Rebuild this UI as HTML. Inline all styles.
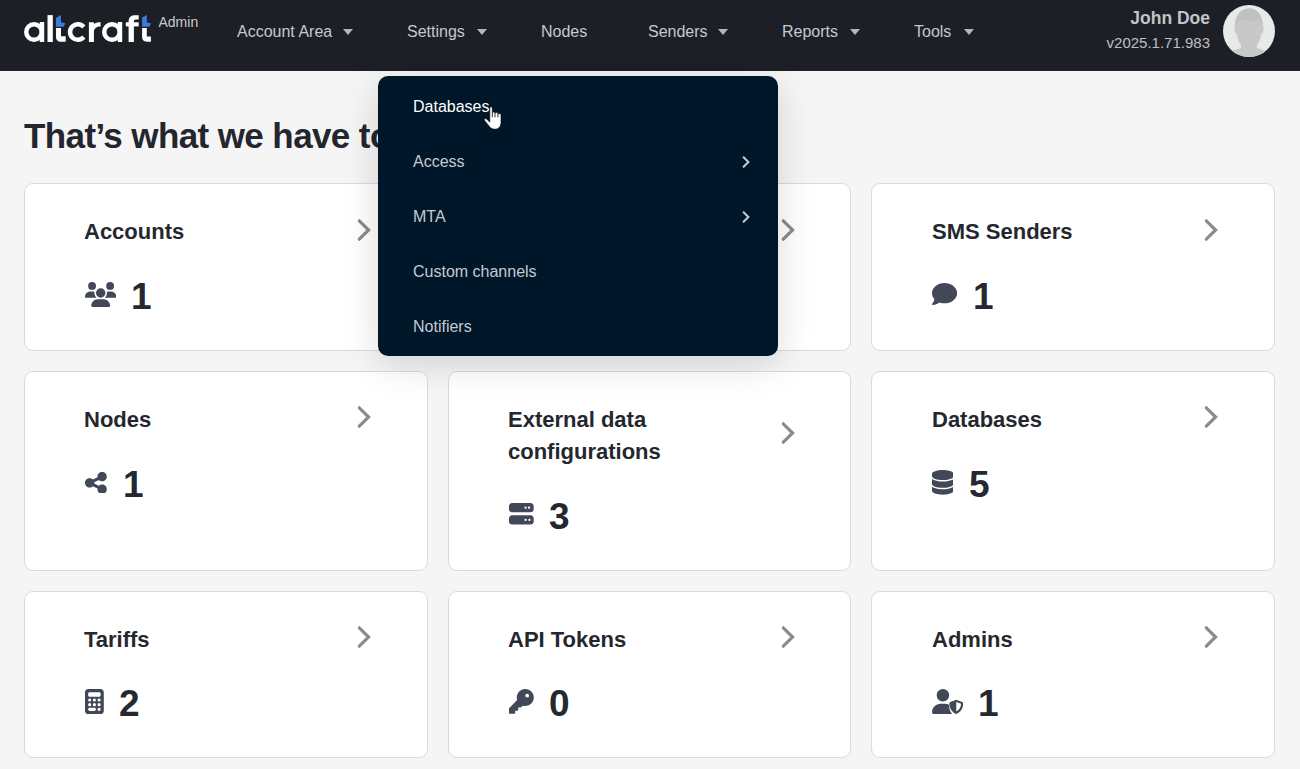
<!DOCTYPE html>
<html>
<head>
<meta charset="utf-8">
<style>
*{box-sizing:border-box;margin:0;padding:0}
html,body{width:1300px;height:769px;overflow:hidden;background:#f5f5f5;font-family:"Liberation Sans",sans-serif;position:relative}
.abs{position:absolute;white-space:nowrap}
.hdr{position:absolute;left:0;top:0;width:1300px;height:71px;background:#1d1f27}
.nav{position:absolute;top:22px;font-size:16px;line-height:20px;color:#c6c8cc;white-space:nowrap}
.tri{position:absolute;top:29px;width:0;height:0;border-left:5px solid transparent;border-right:5px solid transparent;border-top:6px solid #b5b6ba}
.user{position:absolute;right:90px;text-align:right;color:#c8cacf;white-space:nowrap}
h1{position:absolute;left:24px;top:116px;font-size:35px;letter-spacing:-0.6px;line-height:40px;font-weight:700;color:#23262e;white-space:nowrap}
.card{position:absolute;background:#fff;border:1px solid #d9dbe3;border-radius:9px}
.ttl{position:absolute;font-size:22px;line-height:32px;font-weight:700;color:#24272e;white-space:nowrap}
.num{position:absolute;font-size:37px;line-height:40px;font-weight:700;color:#25282f}
.ico{position:absolute;fill:#424857}
.dd{position:absolute;left:378px;top:76px;width:400px;height:280px;background:#001629;border-radius:10px;box-shadow:0 8px 36px rgba(0,0,0,.15)}
.ddi{position:absolute;left:35px;font-size:16px;line-height:20px;color:#c6cad1;white-space:nowrap}
</style>
</head>
<body>
<div class="hdr">
<svg class="abs" style="left:0;top:0" width="210" height="60" viewBox="0 0 210 60">
    <g fill="#fff">
      <circle cx="34" cy="32" r="7.75" fill="none" stroke="#fff" stroke-width="4.5"/>
      <rect x="39.7" y="22" width="4.5" height="20"/>
      <rect x="47.5" y="15.1" width="5.3" height="26.9"/>
      <path d="M56 28 H61 V36.3 H65.7 V41.8 H61 C58 41.8 56 39.8 56 37 Z"/>
      <path d="M83.74 27.02 A7.75 7.75 0 1 0 83.74 36.98" fill="none" stroke="#fff" stroke-width="4.5"/>
      <path d="M88.9 42 V22.2 H93.9 V24 C95.3 22.8 97.5 22.2 100.6 22.2 V26.5 C96.5 26.5 93.9 28.5 93.9 32 V42 Z"/>
      <circle cx="112" cy="32" r="7.75" fill="none" stroke="#fff" stroke-width="4.5"/>
      <rect x="117.7" y="22" width="4.5" height="20"/>
      <path d="M128.6 42 V21 C128.6 17.5 131 15.2 134.5 15.2 H138.7 V19.6 H135.8 C134.6 19.6 133.9 20.3 133.9 21.5 V42 Z"/>
      <rect x="125.8" y="22.3" width="12.9" height="4.1"/>
      <path d="M142.1 28.1 H146.8 V36.5 H150.9 V41.7 H146.8 C143.9 41.7 142.1 39.8 142.1 37 Z"/>
    </g>
    <g fill="#3b7ddd">
      <path d="M56 18 L61 15 V22.3 L65.2 23.3 L63.8 26.8 H56 Z"/>
      <path d="M142.1 17.6 L146.8 15 V22.2 L150.9 23.5 L149.5 26.8 H142.1 Z"/>
    </g>
  </svg>
<div class="abs" style="left:158.5px;top:14px;font-size:14px;line-height:16px;color:#c9cbd2">Admin</div>
<div class="nav" style="left:237px">Account Area</div>
<div class="tri" style="left:343px"></div>
<div class="nav" style="left:407px">Settings</div>
<div class="tri" style="left:477px"></div>
<div class="nav" style="left:541px">Nodes</div>
<div class="nav" style="left:648px">Senders</div>
<div class="tri" style="left:718px"></div>
<div class="nav" style="left:782px">Reports</div>
<div class="tri" style="left:850px"></div>
<div class="nav" style="left:914px">Tools</div>
<div class="tri" style="left:964px"></div>
<div class="user" style="top:7.5px;font-size:17.5px;line-height:20px;font-weight:700;color:#c3c4c8">John Doe</div>
<div class="user" style="top:34px;font-size:15px;line-height:18px;color:#bdbfc3">v2025.1.71.983</div>
<svg class="abs" style="left:1223px;top:5px" width="52" height="52" viewBox="0 0 52 52">
    <defs><clipPath id="cc"><circle cx="26" cy="26" r="26"/></clipPath></defs>
    <circle cx="26" cy="26" r="26" fill="#e8e9ea"/>
    <g clip-path="url(#cc)" fill="#c8c8c8">
      <path d="M12 22 C12 10 18 3.5 26 3.5 C34 3.5 40 10 40 22 C40.8 22 41 24 40 27 C39.5 28.5 39 29 38.5 29 C37.5 34 35.5 38 34 40 V43 L46 47 C50 48.5 52 50 52 52 H0 C0 50 2 48.5 6 47 L18 43 V40 C16.5 38 14.5 34 13.5 29 C13 29 12.5 28.5 12 27 C11 24 11.2 22 12 22 Z"/>
      <path fill="#c1c1c1" d="M12.2 21.5 C11.8 10 18 3.5 26 3.5 C34 3.5 40.2 10 39.8 21.5 C39 18 37.5 15.5 35.5 14.5 C32 16.5 28 17 24 16 C20 15 17.5 14.5 15.5 16 C13.8 17 12.8 19 12.2 21.5 Z"/>
    </g>
  </svg>
</div>
<h1>That&#8217;s what we have today</h1>
<div class="card" style="left:24px;top:183px;width:404px;height:168px"></div>
<div class="card" style="left:448px;top:183px;width:403px;height:168px"></div>
<div class="card" style="left:871px;top:183px;width:404px;height:168px"></div>
<div class="card" style="left:24px;top:371px;width:404px;height:200px"></div>
<div class="card" style="left:448px;top:371px;width:403px;height:200px"></div>
<div class="card" style="left:871px;top:371px;width:404px;height:200px"></div>
<div class="card" style="left:24px;top:591px;width:404px;height:167px"></div>
<div class="card" style="left:448px;top:591px;width:403px;height:167px"></div>
<div class="card" style="left:871px;top:591px;width:404px;height:167px"></div>
<div class="ttl" style="left:84px;top:215.7px">Accounts</div>
<div class="ttl" style="left:508px;top:215.7px">Messengers</div>
<div class="ttl" style="left:932px;top:215.7px">SMS Senders</div>
<div class="ttl" style="left:84px;top:403.7px">Nodes</div>
<div class="ttl" style="left:508px;top:403.7px">External data<br>configurations</div>
<div class="ttl" style="left:932px;top:403.7px">Databases</div>
<div class="ttl" style="left:84px;top:623.7px">Tariffs</div>
<div class="ttl" style="left:508px;top:623.7px">API Tokens</div>
<div class="ttl" style="left:932px;top:623.7px">Admins</div>
<svg class="abs" style="left:355px;top:214.70000000000002px" width="20" height="30" viewBox="0 0 20 30"><polyline points="4.3,5.8 13.6,15 4.3,24.2" fill="none" stroke="#8b8b8b" stroke-width="3.2" stroke-linecap="round" stroke-linejoin="miter"/></svg>
<svg class="abs" style="left:779px;top:214.70000000000002px" width="20" height="30" viewBox="0 0 20 30"><polyline points="4.3,5.8 13.6,15 4.3,24.2" fill="none" stroke="#8b8b8b" stroke-width="3.2" stroke-linecap="round" stroke-linejoin="miter"/></svg>
<svg class="abs" style="left:1202px;top:214.70000000000002px" width="20" height="30" viewBox="0 0 20 30"><polyline points="4.3,5.8 13.6,15 4.3,24.2" fill="none" stroke="#8b8b8b" stroke-width="3.2" stroke-linecap="round" stroke-linejoin="miter"/></svg>
<svg class="abs" style="left:355px;top:401.79999999999995px" width="20" height="30" viewBox="0 0 20 30"><polyline points="4.3,5.8 13.6,15 4.3,24.2" fill="none" stroke="#8b8b8b" stroke-width="3.2" stroke-linecap="round" stroke-linejoin="miter"/></svg>
<svg class="abs" style="left:779px;top:417.9px" width="20" height="30" viewBox="0 0 20 30"><polyline points="4.3,5.8 13.6,15 4.3,24.2" fill="none" stroke="#8b8b8b" stroke-width="3.2" stroke-linecap="round" stroke-linejoin="miter"/></svg>
<svg class="abs" style="left:1202px;top:401.79999999999995px" width="20" height="30" viewBox="0 0 20 30"><polyline points="4.3,5.8 13.6,15 4.3,24.2" fill="none" stroke="#8b8b8b" stroke-width="3.2" stroke-linecap="round" stroke-linejoin="miter"/></svg>
<svg class="abs" style="left:355px;top:621.8px" width="20" height="30" viewBox="0 0 20 30"><polyline points="4.3,5.8 13.6,15 4.3,24.2" fill="none" stroke="#8b8b8b" stroke-width="3.2" stroke-linecap="round" stroke-linejoin="miter"/></svg>
<svg class="abs" style="left:779px;top:621.8px" width="20" height="30" viewBox="0 0 20 30"><polyline points="4.3,5.8 13.6,15 4.3,24.2" fill="none" stroke="#8b8b8b" stroke-width="3.2" stroke-linecap="round" stroke-linejoin="miter"/></svg>
<svg class="abs" style="left:1202px;top:621.8px" width="20" height="30" viewBox="0 0 20 30"><polyline points="4.3,5.8 13.6,15 4.3,24.2" fill="none" stroke="#8b8b8b" stroke-width="3.2" stroke-linecap="round" stroke-linejoin="miter"/></svg>
<svg class="ico" style="left:84.9px;top:281.9px" width="31.4" height="25.1" viewBox="0 0 640 512" preserveAspectRatio="none"><path fill-rule="evenodd" d="M144 0a80 80 0 1 1 0 160A80 80 0 1 1 144 0zM512 0a80 80 0 1 1 0 160A80 80 0 1 1 512 0zM0 298.7C0 239.8 47.8 192 106.7 192h42.7c15.9 0 31 3.5 44.6 9.7c-1.3 7.2-1.9 14.7-1.9 22.3c0 38.2 16.8 72.5 43.3 96c-.2 0-.4 0-.7 0H21.3C9.6 320 0 310.4 0 298.7zM405.3 320c-.2 0-.4 0-.7 0c26.6-23.5 43.3-57.8 43.3-96c0-7.6-.7-15-1.9-22.3c13.6-6.3 28.7-9.7 44.6-9.7h42.7C592.2 192 640 239.8 640 298.7c0 11.8-9.6 21.3-21.3 21.3H405.3zM224 224a96 96 0 1 1 192 0 96 96 0 1 1 -192 0zM128 485.3C128 411.7 187.7 352 261.3 352H378.7C452.3 352 512 411.7 512 485.3c0 14.7-11.9 26.7-26.7 26.7H154.7c-14.7 0-26.7-11.9-26.7-26.7z"/></svg>
<svg class="ico" style="left:931.9px;top:283.3px" width="25.1" height="21.95" viewBox="0 32 512 448" preserveAspectRatio="none"><path fill-rule="evenodd" d="M512 240c0 114.9-114.6 208-256 208c-37.1 0-72.3-6.4-104.1-17.9c-11.9 8.7-31.3 20.6-54.3 30.6C73.6 471.1 44.7 480 16 480c-6.5 0-12.3-3.9-14.8-9.9c-2.5-6-1.1-12.8 3.4-17.4l0 0 0 0 0 0 0 0 .3-.3c.3-.3 .7-.7 1.3-1.4c1.1-1.2 2.8-3.1 4.9-5.7c4.1-5 9.6-12.4 15.2-21.6c10-16.6 19.5-38.4 21.4-62.9C17.7 326.8 0 285.1 0 240C0 125.1 114.6 32 256 32S512 125.1 512 240z"/></svg>
<svg class="ico" style="left:85.1px;top:471.5px" width="21.8" height="21.8" viewBox="0 32 448 448" preserveAspectRatio="none"><path fill-rule="evenodd" d="M352 224c53 0 96-43 96-96s-43-96-96-96s-96 43-96 96c0 4 .2 8 .7 11.9l-94.1 47C145.4 170.2 121.9 160 96 160c-53 0-96 43-96 96s43 96 96 96c25.9 0 49.4-10.2 66.6-26.9l94.1 47c-.5 3.9-.7 7.8-.7 11.9c0 53 43 96 96 96s96-43 96-96s-43-96-96-96c-25.9 0-49.4 10.2-66.6 26.9l-94.1-47c.5-3.9 .7-7.8 .7-11.9s-.2-8-.7-11.9l94.1-47C302.6 213.8 326.1 224 352 224z"/></svg>
<svg class="ico" style="left:509.1px;top:503.3px" width="24.7" height="21.6" viewBox="0 32 512 448" preserveAspectRatio="none"><path fill-rule="evenodd" d="M64 32C28.7 32 0 60.7 0 96v64c0 35.3 28.7 64 64 64H448c35.3 0 64-28.7 64-64V96c0-35.3-28.7-64-64-64H64zm280 72a24 24 0 1 1 0 48 24 24 0 1 1 0-48zm48 24a24 24 0 1 1 48 0 24 24 0 1 1 -48 0zM64 288c-35.3 0-64 28.7-64 64v64c0 35.3 28.7 64 64 64H448c35.3 0 64-28.7 64-64V352c0-35.3-28.7-64-64-64H64zm280 72a24 24 0 1 1 0 48 24 24 0 1 1 0-48zm56 24a24 24 0 1 1 48 0 24 24 0 1 1 -48 0z"/></svg>
<svg class="ico" style="left:931.9px;top:470px" width="21.6" height="24.7" viewBox="0 0 448 512" preserveAspectRatio="none"><path fill-rule="evenodd" d="M448 80v48c0 44.2-100.3 80-224 80S0 172.2 0 128V80C0 35.8 100.3 0 224 0S448 35.8 448 80zM393.2 214.7c20.8-7.4 39.9-16.9 54.8-28.6V288c0 44.2-100.3 80-224 80S0 332.2 0 288V186.1c14.9 11.8 34 21.2 54.8 28.6C99.7 230.7 159.5 240 224 240s124.3-9.3 169.2-25.3zM0 346.1c14.9 11.8 34 21.2 54.8 28.6C99.7 390.7 159.5 400 224 400s124.3-9.3 169.2-25.3c20.8-7.4 39.9-16.9 54.8-28.6V432c0 44.2-100.3 80-224 80S0 476.2 0 432V346.1z"/></svg>
<svg class="ico" style="left:85px;top:689px" width="18.8" height="25" viewBox="0 0 384 512" preserveAspectRatio="none"><path fill-rule="evenodd" d="M64 0C28.7 0 0 28.7 0 64V448c0 35.3 28.7 64 64 64H320c35.3 0 64-28.7 64-64V64c0-35.3-28.7-64-64-64H64zM96 64H288c17.7 0 32 14.3 32 32v32c0 17.7-14.3 32-32 32H96c-17.7 0-32-14.3-32-32V96c0-17.7 14.3-32 32-32zm32 160a32 32 0 1 1 -64 0 32 32 0 1 1 64 0zM96 352a32 32 0 1 1 0-64 32 32 0 1 1 0 64zM64 416c0-17.7 14.3-32 32-32h96c17.7 0 32 14.3 32 32s-14.3 32-32 32H96c-17.7 0-32-14.3-32-32zM192 256a32 32 0 1 1 0-64 32 32 0 1 1 0 64zm32 64a32 32 0 1 1 -64 0 32 32 0 1 1 64 0zm64-64a32 32 0 1 1 0-64 32 32 0 1 1 0 64zm32 64a32 32 0 1 1 -64 0 32 32 0 1 1 64 0zM288 448a32 32 0 1 1 0-64 32 32 0 1 1 0 64z"/></svg>
<svg class="ico" style="left:509px;top:689px" width="24.8" height="24.8" viewBox="0 0 512 512" preserveAspectRatio="none"><path fill-rule="evenodd" d="M336 352c97.2 0 176-78.8 176-176S433.2 0 336 0S160 78.8 160 176c0 18.7 2.9 36.8 8.3 53.7L7 391c-4.5 4.5-7 10.6-7 17v80c0 13.3 10.7 24 24 24h80c13.3 0 24-10.7 24-24V448h40c13.3 0 24-10.7 24-24V384h40c6.4 0 12.5-2.5 17-7l33.3-33.3c16.9 5.4 35 8.3 53.7 8.3zM376 96a40 40 0 1 1 0 80 40 40 0 1 1 0-80z"/></svg>
<svg class="ico" style="left:931.9px;top:689.1px" width="31.2" height="25" viewBox="0 0 640 512" preserveAspectRatio="none"><path fill-rule="evenodd" d="M224 0a128 128 0 1 1 0 256A128 128 0 1 1 224 0zM178.3 304H269.7C301 304 330 313 354 329C352 336 351 342 351 350C351 405 370 466 412 512H29.7C13.3 512 0 498.7 0 482.3C0 383.8 79.8 304 178.3 304zM498 219L620 267C632 272 640 283 640 296C640 380 602 468 498 512C394 468 356 380 356 296C356 283 364 272 376 267ZM498 265V460C568 425 594 360 596 302Z"/></svg>
<div class="num" style="left:131px;top:277px">1</div>
<div class="num" style="left:973px;top:277px">1</div>
<div class="num" style="left:123px;top:465px">1</div>
<div class="num" style="left:549px;top:496.5px">3</div>
<div class="num" style="left:969px;top:465px">5</div>
<div class="num" style="left:119px;top:684px">2</div>
<div class="num" style="left:549px;top:684px">0</div>
<div class="num" style="left:978px;top:684px">1</div>
<div class="dd">
<div class="ddi" style="top:21px;color:#ffffff">Databases</div>
<div class="ddi" style="top:76px">Access</div>
<div class="ddi" style="top:131px">MTA</div>
<div class="ddi" style="top:186px">Custom channels</div>
<div class="ddi" style="top:241px">Notifiers</div>
<svg class="abs" style="left:362px;top:78px" width="14" height="16" viewBox="0 0 14 16"><polyline points="3.6,3.3 8.4,8 3.6,12.7" fill="none" stroke="#c9ccd1" stroke-width="2" stroke-linecap="round"/></svg>
<svg class="abs" style="left:362px;top:133px" width="14" height="16" viewBox="0 0 14 16"><polyline points="3.6,3.3 8.4,8 3.6,12.7" fill="none" stroke="#c9ccd1" stroke-width="2" stroke-linecap="round"/></svg>
</div>
<svg class="abs" style="left:480px;top:95px" width="30" height="40" viewBox="0 0 30 40"><path d="M9.8 13C9.8 12.2 10.4 11.8 11 11.8C11.6 11.8 12.3 12.2 12.3 13V18C12.3 17.4 12.9 17.1 13.6 17.1C14.4 17.1 15 17.5 15 18.2V18.6C15.1 18 15.7 17.6 16.5 17.6C17.3 17.6 17.9 18.1 17.9 18.8V19.4C18.1 18.9 18.7 18.6 19.4 18.6C20.3 18.6 21 19.2 21 20V27.5C21 31.5 18.5 34.2 15 34.2C12.5 34.2 10.8 33.2 9.4 31.4L4.6 25.6C4.1 25 4.2 24.2 4.8 23.8C5.4 23.4 6.3 23.6 6.8 24.2L9.8 27.2Z" fill="#fff" stroke="#000" stroke-width="0.6"/><path d="M12.3 18V22.3M15 18.6V22.3M17.9 19.4V22.3" stroke="#000" stroke-width="0.8"/></svg>
</body>
</html>
